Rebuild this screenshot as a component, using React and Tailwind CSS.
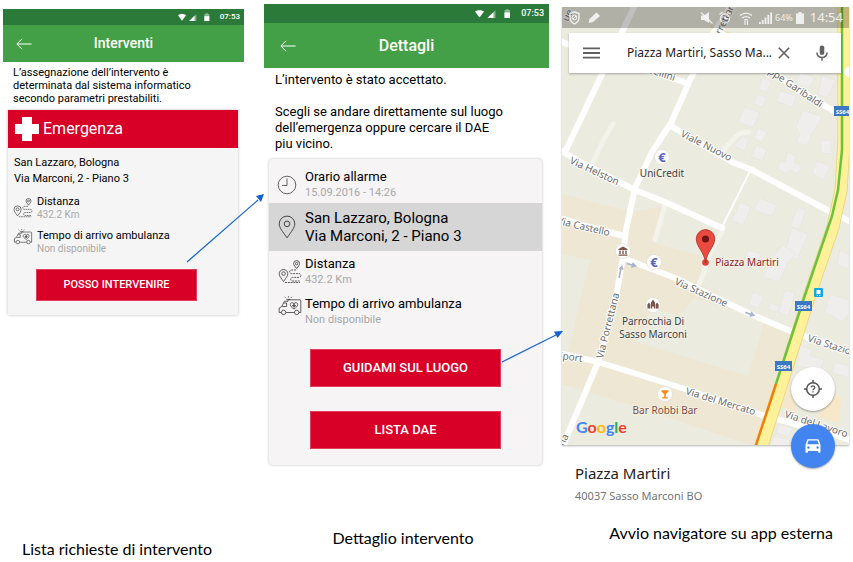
import React from "react";

/* ---------- Icons ---------- */

function BackArrow({ className }) {
  return (
    <svg viewBox="0 0 16 12" className={className} fill="none" stroke="#fff" strokeWidth="1">
      <path d="M6 .8 .9 6 6 11.2M.9 6H15.6" />
    </svg>
  );
}

function PhoneStatusIcons({ className }) {
  return (
    <svg viewBox="0 0 38 10" className={className} fill="#fff">
      <path d="M0 2.6C2.4.7 6.600 .7 9 2.600L4.500 8.500Z" />
      <path d="M12.500 9 20.500 1V9Z" opacity=".4" />
      <path d="M12.500 9 18.500 3V9Z" />
      <path d="M29.500 1h1.400V.3h2.700V1H35v8h-5.500Z" opacity=".45" />
      <path d="M29.500 3.500H35V9h-5.500Z" />
    </svg>
  );
}

function RouteIcon({ className }) {
  return (
    <svg viewBox="0 0 24 24" className={className} fill="none" stroke="#444" strokeWidth=".85">
      <path d="M5.500 21.500C3 18 1.200 16 1.200 13.800a4.300 4.300 0 0 1 8.600 0c0 2.200-1.800 4.200-4.300 7.700Z" />
      <circle cx="5.500" cy="13.600" r="1.800" />
      <path d="M18.600 8.600C17 6.300 15.600 5 15.600 3.600a3 3 0 0 1 6 0c0 1.400-1.400 2.700-3 5Z" />
      <circle cx="18.600" cy="3.600" r="1.200" />
      <path
        d="M18 10H13.500a1.800 1.800 0 0 0 0 3.600H21a1.900 1.900 0 0 1 0 3.800H14.500a1.800 1.800 0 0 0 0 3.600H22M7 22.500H22"
        strokeDasharray="2 .8"
      />
    </svg>
  );
}

function AmbulanceIcon({ className }) {
  return (
    <svg viewBox="0 0 24 20" className={className} fill="none" stroke="#444" strokeWidth=".85">
      <path d="M3.200 16.500H1.200V12l2.600-1.500 2.600-5.200H10V3.800H21.800a1 1 0 0 1 1 1V16.500H21M8 16.500h8.500" />
      <path d="M4.200 10.500H8.600V7H6" />
      <circle cx="5.600" cy="16.400" r="2.200" />
      <circle cx="18.700" cy="16.400" r="2.200" />
      <path d="M16 13C13.500 11.300 12.300 10.200 12.300 8.500c0-2 2.500-2.400 3.700-.9 1.200-1.500 3.700-1.100 3.700.9 0 1.700-1.200 2.800-3.700 4.500Z" />
      <path d="M16 7.800v3.600M14.200 9.600h3.600" strokeWidth="1.300" />
      <path d="M8.200 3.400h4.400M7.600 1.800 6.600.8M10.400 1.500V.2M13 1.800l1-1" />
    </svg>
  );
}

function ClockIcon({ className }) {
  return (
    <svg viewBox="0 0 20 20" className={className} fill="none" stroke="#555" strokeWidth=".9">
      <circle cx="10" cy="10" r="8.800" />
      <path d="M10 3.500V10.500H5" />
    </svg>
  );
}

function PinIcon({ className }) {
  return (
    <svg viewBox="0 0 18 24" className={className} fill="none" stroke="#444" strokeWidth="1">
      <path d="M9 22.800C4.500 16.500 1.200 12.500 1.200 8.900a7.800 7.800 0 0 1 15.600 0c0 3.600-3.300 7.600-7.800 13.900Z" />
      <circle cx="9" cy="8.900" r="2.800" />
    </svg>
  );
}

function CrossIcon({ className }) {
  return (
    <svg viewBox="0 0 24 24" className={className} fill="#fff">
      <path d="M7 0h10v7h7v10h-7v7H7v-7H0V7h7Z" />
    </svg>
  );
}

/* ---------- Shared pieces of the green app ---------- */

function ActionButton({ children, className }) {
  return (
    <button
      type="button"
      className={`border border-[#e0405c] bg-[#d80027] font-medium text-white ${className}`}
    >
      {children}
    </button>
  );
}

function InterventionList() {
  return (
    <section className="relative flex flex-col pt-[9px]">
      <header>
        <div className="flex h-4 items-center justify-end gap-2 bg-[#2c7a3a] pr-1 text-[8px] font-medium text-white">
          <PhoneStatusIcons className="h-[9px] w-[34px]" />
          <span>07:53</span>
        </div>
        <div className="flex h-[37px] items-center bg-[#43a047] px-[13px]">
          <button type="button" aria-label="Indietro">
            <BackArrow className="h-3 w-4" />
          </button>
          <h1 className="flex-1 pr-4 text-center text-[14px] font-medium text-white">Interventi</h1>
        </div>
      </header>

      <p className="px-[10px] pt-1 text-[11px] leading-[13px] text-black">
        L’assegnazione dell’intervento è
        <br />
        determinata dal sistema informatico
        <br />
        secondo parametri prestabiliti.
      </p>

      <article className="mr-[6px] ml-[5px] mt-[5px] bg-[#f5f5f5] pb-[14px] shadow-[0_0_3px_rgba(0,0,0,0.25)]">
        <h2 className="flex h-[38px] items-center gap-1 bg-[#d80027] px-[7px] text-[16px] text-white">
          <CrossIcon className="size-6" />
          Emergenza
        </h2>
        <p className="px-[6px] pt-[7px] text-[11px] leading-4 text-black">
          San Lazzaro, Bologna
          <br />
          Via Marconi, 2 - Piano 3
        </p>
        <dl className="px-[5px] text-[11px] leading-[13px]">
          <div className="mt-2 flex items-center gap-1">
            <RouteIcon className="size-5" />
            <div>
              <dt className="text-black">Distanza</dt>
              <dd className="text-[10px] text-[#a8a8a8]">432.2 Km</dd>
            </div>
          </div>
          <div className="mt-2 flex items-start gap-1">
            <AmbulanceIcon className="h-4 w-5" />
            <div>
              <dt className="text-black">Tempo di arrivo ambulanza</dt>
              <dd className="text-[10px] text-[#a8a8a8]">Non disponibile</dd>
            </div>
          </div>
        </dl>
        <ActionButton className="mt-[14px] ml-7 block h-8 w-[70%] text-[11px]">POSSO INTERVENIRE</ActionButton>
      </article>

      <svg viewBox="0 0 78 70" className="absolute top-[193px] -right-5 z-10 h-[70px] w-[78px]">
        <path d="M1 69 72 7" stroke="#1c69d0" strokeWidth="1.300" />
        <path d="M78 1 75 9 70 3Z" fill="#1060d0" />
      </svg>
    </section>
  );
}

function InterventionDetail() {
  return (
    <section className="relative flex flex-col pt-1 pl-[7px]">
      <header>
        <div className="flex h-[19px] items-center justify-end gap-2 bg-[#2c7a3a] pr-[5px] text-[9px] font-medium text-white">
          <PhoneStatusIcons className="h-[10px] w-[38px]" />
          <span>07:53</span>
        </div>
        <div className="flex h-[45px] items-center bg-[#43a047] px-4">
          <button type="button" aria-label="Indietro">
            <BackArrow className="h-3 w-4" />
          </button>
          <h1 className="flex-1 pr-4 text-center text-[16px] font-medium text-white">Dettagli</h1>
        </div>
      </header>

      <div className="flex flex-col gap-4 px-[11px] pt-1 text-[13px] leading-4 text-black">
        <p>L’intervento è stato accettato.</p>
        <p>
          Scegli se andare direttamente sul luogo
          <br />
          dell’emergenza oppure cercare il DAE
          <br />
          piu vicino.
        </p>
      </div>

      <article className="mr-[7px] ml-[5px] mt-[7px] rounded-sm bg-[#f6f4f5] pb-4 text-[13px] leading-4 shadow-[0_0_3px_rgba(0,0,0,0.25)]">
        <dl>
          <div className="flex h-11 items-center gap-2 px-2 pt-[7px]">
            <ClockIcon className="size-5" />
            <div>
              <dt className="text-black">Orario allarme</dt>
              <dd className="text-[11px] text-[#a8a8a8]">15.09.2016 - 14:26</dd>
            </div>
          </div>
        </dl>
        <p className="flex h-12 items-center gap-[9px] bg-[#d6d6d6] px-[9px] text-[15px] leading-[18px] text-black">
          <PinIcon className="h-6 w-[18px]" />
          <span>
            San Lazzaro, Bologna
            <br />
            Via Marconi, 2 - Piano 3
          </span>
        </p>
        <dl>
          <div className="mt-[5px] flex items-center gap-[3px] px-[9px]">
            <RouteIcon className="size-6" />
            <div>
              <dt className="text-black">Distanza</dt>
              <dd className="text-[11px] text-[#a8a8a8]">432.2 Km</dd>
            </div>
          </div>
          <div className="mt-2 flex items-start gap-[3px] px-[9px]">
            <AmbulanceIcon className="h-5 w-6" />
            <div>
              <dt className="text-black">Tempo di arrivo ambulanza</dt>
              <dd className="text-[11px] text-[#a8a8a8]">Non disponibile</dd>
            </div>
          </div>
        </dl>
        <div className="mx-auto mt-[21px] flex w-[70%] flex-col gap-6">
          <ActionButton className="h-[38px] text-[13px]">GUIDAMI SUL LUOGO</ActionButton>
          <ActionButton className="h-[38px] text-[13px]">LISTA DAE</ActionButton>
        </div>
      </article>

      <svg viewBox="0 0 62 34" className="absolute top-[330px] -right-[14px] z-10 h-[34px] w-[62px]">
        <path d="M1 32 55 5" stroke="#1c69d0" strokeWidth="1.300" />
        <path d="M62 1 56.500 8 53 1.500Z" fill="#1060d0" />
      </svg>
    </section>
  );
}

/* ---------- Map ---------- */

const tanAreas = [
  "562,194 600,204 634,212 662,206 655,243 700,256 704,286 748,314 792,334 757,446 735,440 640,408 562,384",
];

const lightAreas = [
  "562,254 590,260 578,310 568,352 562,350",
  "652,308 680,316 694,298 765,320 748,376 636,342",
];

const buildings = [
  "762,78 771,81 767,92 758,89",
  "758,94 767,98 762,107 753,103",
  "781,91 796,96 792,107 776,101",
  "800,72 815,78 808,88 796,84",
  "822,76 836,80 830,92 827,97 818,95",
  "745,107 760,113 753,127 738,122",
  "758,128 767,132 762,142 754,138",
  "742,136 749,139 744,151 734,146",
  "803,110 822,117 812,134 807,146 796,142 800,134 796,127",
  "757,145 767,150 762,161 751,156",
  "787,152 796,156 794,162 802,166 798,174 790,170 786,174 778,169 780,161 785,162",
  "817,161 830,166 823,180 812,173",
  "821,140 831,141 831,154 821,153",
  "740,202 751,207 743,225 732,221",
  "760,198 777,205 772,216 754,210",
  "798,207 806,210 799,229 790,226",
  "792,228 808,234 797,260 785,252",
  "783,245 796,254 788,262 779,282 763,277 773,256",
  "748,250 761,254 757,262 744,260",
  "840,250 849,255 849,269 837,265",
  "753,292 764,297 758,308 749,304",
  "785,290 795,293 788,316 779,312",
  "771,303 780,306 777,312 768,309",
  "830,294 849,300 849,314 842,322 825,312",
  "800,345 812,350 810,356 824,360 820,370 797,366",
  "835,362 849,366 849,378 832,373",
  "779,424 792,428 789,437 776,433",
  "774,436 790,440 788,446 770,446",
];

const paleRoads = [
  "M613 124 604 139 592 164",
  "M665 205 655 240",
  "M749 132C736 132 734 140 727 146L718 156",
  "M722 232 709 254 704 272 697 290",
];

const whiteRoads = [
  "M634 7 603 72 585 110 565 152",
  "M732 4 713 34 690 80 671 123 652 152 635 188 626 230 623 257 616 297 598 362 580 405 562 448",
  "M562 42 600 55 687 83",
  "M720 32 788 83 845 118",
  "M671 126 732 162 752 170 829 211 851 222",
  "M560 150 580 162 635 190 665 202 722 228",
  "M560 218 590 227 624 236",
  "M623 258 675 278 748 313 795 333 851 353",
  "M560 353 598 362 682 388 762 415 851 440",
];

const streetLabels = [
  { text: "Via Helston", x: 569, y: 163, angle: 25 },
  { text: "Via Castello", x: 609, y: 236, angle: 13, anchor: "end" },
  { text: "Via dello Sport", x: 582, y: 362, angle: 8, anchor: "end" },
  { text: "Via Porrettana", x: 603, y: 359, angle: -76 },
  { text: "Via Porrettana", x: 569, y: 436, angle: -64, anchor: "end" },
  { text: "rrettana", x: 721, y: 35, angle: -64 },
  { text: "Via Stazione", x: 674, y: 284, angle: 24 },
  { text: "Via Stazione", x: 807, y: 341, angle: 18 },
  { text: "Via del Mercato", x: 685, y: 394, angle: 17 },
  { text: "Via del Lavoro", x: 784, y: 417, angle: 18 },
  { text: "Viale Nuovo", x: 680, y: 136, angle: 27 },
  { text: "Giuseppe Garibaldi", x: 820, y: 108, angle: 34, anchor: "end" },
  { text: "Via Bellini", x: 674, y: 81, angle: 18, anchor: "end" },
  { text: "ue", x: 568, y: 22, angle: -64 },
];

const placeLabels = [
  { text: "UniCredit", x: 662, y: 177, color: "#3c3c3c" },
  { text: "Piazza Martiri", x: 747, y: 266, color: "#8c1c1c" },
  { text: "Parrocchia Di", x: 653, y: 325, color: "#3c3c3c" },
  { text: "Sasso Marconi", x: 653, y: 338, color: "#3c3c3c" },
  { text: "Bar Robbi Bar", x: 665, y: 414, color: "#7b4a3a" },
];

const shields = [
  { x: 834, y: 106 },
  { x: 795, y: 301 },
  { x: 775, y: 361 },
];

const poiDots = [
  { x: 662, y: 157 },
  { x: 654, y: 262 },
  { x: 623, y: 251 },
  { x: 653, y: 305 },
  { x: 665, y: 394 },
];

function StreetMap() {
  return (
    <svg
      viewBox="562 7 287 438"
      preserveAspectRatio="xMidYMid slice"
      className="block aspect-[287/438] w-full font-['Noto_Sans',sans-serif]"
    >
      <rect x="562" y="7" width="287" height="439" fill="#ecebdf" />
      {tanAreas.map((points) => (
        <polygon key={points} points={points} fill="#ede7d3" />
      ))}
      {lightAreas.map((points) => (
        <polygon key={points} points={points} fill="#ecebdf" />
      ))}
      <polygon points="710,25 745,38 740,46 715,34" fill="#f3dfb6" />
      <polygon points="790,378 800,382 795,412 781,407" fill="#f4e7cc" />
      <polygon points="829,393 842,397 838,423 818,417" fill="#f6e8c8" />
      {buildings.map((points) => (
        <polygon key={points} points={points} fill="#efeeec" stroke="#e3e2de" strokeWidth=".5" />
      ))}
      <g fill="none" strokeLinecap="round" strokeLinejoin="round">
        {paleRoads.map((d) => (
          <path key={d} d={d} stroke="#f2f3ea" strokeWidth="5" />
        ))}
        {whiteRoads.map((d) => (
          <path key={d} d={d} stroke="#fff" strokeWidth="6" />
        ))}
        <path d="M750 171 723 225" stroke="#fff" strokeWidth="1.800" />
      </g>

      <g fill="none" strokeLinejoin="round">
        <path d="M844 0 844 140 841 190 833 227 808 300 786 370 760 452" stroke="#e6d282" strokeWidth="13" />
        <path d="M844 0 844 140 841 190 833 227 808 300 786 370 760 452" stroke="#fff09a" strokeWidth="11.500" />
        <path d="M842 0 842 150 838 190 832 216 805 295 776 384" stroke="#6cc23c" strokeWidth="2.500" />
        <path d="M776 384 755 448" stroke="#f57c00" strokeWidth="2.500" />
      </g>
      <circle cx="849" cy="72" r="5" fill="#fff" />

      <g fill="#a9b3cf">
        <path d="M627 262.500l5 1.800.8-2.300 4.200 4.400-5.900 1.400.5-2-5-1.500Z" />
        <path d="M620 278l1.600-8.500 2 .4L622.200 265l-3.700 4 1.400.3-1.600 8.400Z" />
        <path d="M745.500 311.500l5 2 .8-2.200 4 4.400-5.900 1.200.6-1.900-5-1.800Z" />
      </g>

      <g fontSize="10" fill="#6d6d6d" stroke="#fff" strokeWidth="2" paintOrder="stroke" strokeLinejoin="round">
        {streetLabels.map(({ text, x, y, angle, anchor }) => (
          <text key={`${text}${x}`} transform={`translate(${x} ${y}) rotate(${angle})`} textAnchor={anchor || "start"}>
            {text}
          </text>
        ))}
      </g>

      {shields.map(({ x, y }) => (
        <g key={y}>
          <rect x={x} y={y} width="17" height="10" fill="#3b78c4" />
          <text x={x + 8.5} y={y + 7.5} fontSize="6" fontWeight="700" fill="#fff" textAnchor="middle">
            SS64
          </text>
        </g>
      ))}

      {poiDots.map(({ x, y }) => (
        <circle key={x + y} cx={x} cy={y} r="7.500" fill="#fff" stroke="#dcdacf" strokeWidth=".6" />
      ))}
      <g fontSize="13" fontWeight="700" fill="#5566c4" textAnchor="middle">
        <text x="662" y="161.500">€</text>
        <text x="654" y="266.500">€</text>
      </g>
      <path
        d="M623 246.500l4.500 2.500v1h-9v-1ZM619.300 250.500h1.400v3.500h-1.400ZM622.300 250.500h1.400v3.500h-1.400ZM625.300 250.500h1.400v3.500h-1.400ZM618.500 254.500h9v1.300h-9Z"
        fill="#7b5548"
      />
      <path
        d="M653 299.500l2 3v6h-1.200v-2h-1.600v2H651v-6ZM649 302.500l1.400 2v4h-3v-4ZM657 302.500l1.600 2v4h-3v-4Z"
        fill="#7b5548"
      />
      <path d="M661.500 390.200h7v1.200l-2.700 2.800v3h2v1.200h-5.600v-1.200h2v-3l-2.700-2.800Z" fill="#f28a1e" />

      <rect x="814" y="288" width="9" height="9" rx="1" fill="#14a7e0" />
      <path d="M816.500 290h4v4h-4ZM816.800 295h1v1h-1ZM819.300 295h1v1h-1Z" fill="#fff" />

      <circle cx="705.500" cy="262.500" r="3.300" fill="#dc4437" />
      <path
        d="M705.500 263C704.500 252 696.300 247 696.300 238.800a9.200 9.200 0 0 1 18.400 0c0 8.200-8.200 13.200-9.200 24.200Z"
        fill="#ea4a3f"
        stroke="#a82a22"
        strokeWidth=".8"
      />
      <circle cx="705.500" cy="239" r="3.500" fill="#6d1410" />

      <g fontSize="10" textAnchor="middle" stroke="#f5f3ea" strokeWidth="1.500" paintOrder="stroke">
        {placeLabels.map(({ text, x, y, color }) => (
          <text key={text} x={x} y={y} fill={color}>
            {text}
          </text>
        ))}
      </g>
    </svg>
  );
}

function AndroidStatusBar() {
  return (
    <div className="absolute inset-x-0 top-0 flex h-[21px] items-center justify-between bg-black/25 pr-[6px] pl-[7px] font-['Noto_Sans',sans-serif] text-white/80">
      <svg viewBox="0 0 32 14" className="h-[14px] w-8" fill="none" stroke="currentColor">
        <path d="M5.500 1 10 2.500V7c0 2.800-2 4.600-4.500 6C3 11.600 1 9.800 1 7V2.500Z" strokeWidth="1.400" />
        <circle cx="5.500" cy="6.500" r="2.300" />
        <path d="M4 8l3-3" />
        <path d="M19.500 12l1-4 7-6.500 3.500 3.500-7 6Z" fill="currentColor" stroke="none" />
      </svg>
      <div className="flex items-center gap-[3px]">
        <svg viewBox="0 0 72 16" className="h-4 w-[72px]" fill="none" stroke="currentColor" strokeWidth="1.200">
          <path d="M1 5.500h3L9 2v11L4 10H1Z" fill="currentColor" stroke="none" />
          <path d="M1 2.500 12.500 13.500" />
          <circle cx="25" cy="8.500" r="4.500" />
          <path d="M25 5.500v3h2.500M19.500 4.500l3-2.500M30.500 4.500l-3-2.500" />
          <path d="M40 5.500c4-3.300 8-3.300 12 0M42 8c3-2.200 5-2.200 8 0M44 10.300c1.400-1 2.600-1 4 0" />
          <path d="M45 11v4M47.500 11v4" />
          <path d="M59 12h1.800v2H59ZM61.800 10h1.800v4h-1.800ZM64.600 7.500h1.800V14h-1.800ZM67.400 5h1.800v9h-1.800ZM70.200 2.500H72V14h-1.800Z" fill="currentColor" stroke="none" />
        </svg>
        <span className="text-[9px]">64%</span>
        <svg viewBox="0 0 8 12" className="h-3 w-2" fill="currentColor">
          <path d="M2.500 0h3v1.500H8V12H0V1.500h2.500Z" />
        </svg>
        <span className="pl-[3px] text-[13px]">14:54</span>
      </div>
    </div>
  );
}

function SearchBar() {
  return (
    <div className="absolute top-[26px] right-2 left-[7px] flex h-10 items-center bg-white pr-[13px] pl-[14px] shadow-[0_1px_2px_rgba(0,0,0,0.3)]">
      <button type="button" aria-label="Menu">
        <svg viewBox="0 0 17 12" className="h-3 w-[17px]" fill="#616161">
          <path d="M0 .5h17v1.800H0ZM0 5.100h17v1.800H0ZM0 9.700h17v1.800H0Z" />
        </svg>
      </button>
      <input
        type="text"
        aria-label="Cerca"
        defaultValue="Piazza Martiri, Sasso Ma..."
        className="ml-[27px] min-w-0 flex-1 bg-transparent font-['Noto_Sans',sans-serif] text-[12px] text-[#222] outline-none"
      />
      <button type="button" aria-label="Cancella">
        <svg viewBox="0 0 12 12" className="size-3" stroke="#616161" strokeWidth="1.600">
          <path d="M.8.8l10.400 10.400M11.200.8.8 11.200" />
        </svg>
      </button>
      <button type="button" aria-label="Ricerca vocale" className="ml-[26px]">
        <svg viewBox="0 0 12 16" className="h-4 w-3">
          <rect x="3.700" y=".5" width="4.600" height="9.500" rx="2.300" fill="#616161" />
          <path d="M.9 7.500a5.100 5.100 0 0 0 10.200 0M6 12.500V15.800" fill="none" stroke="#616161" strokeWidth="1.500" />
        </svg>
      </button>
    </div>
  );
}

function GoogleLogo() {
  return (
    <span className="absolute bottom-2 left-[14px] font-['Lato',sans-serif] text-[16px] leading-5 font-bold">
      <span className="text-[#4285f4]">G</span>
      <span className="text-[#ea4335]">o</span>
      <span className="text-[#fbbc05]">o</span>
      <span className="text-[#4285f4]">g</span>
      <span className="text-[#34a853]">l</span>
      <span className="text-[#ea4335]">e</span>
    </span>
  );
}

function Navigator() {
  return (
    <section className="flex flex-col pt-[7px]">
      <div className="relative shadow-[0_1px_2px_rgba(0,0,0,0.3)]">
        <StreetMap />
        <AndroidStatusBar />
        <SearchBar />
        <GoogleLogo />
        <div className="absolute right-[14px] -bottom-[23px] flex flex-col gap-[13px]">
          <button
            type="button"
            aria-label="La mia posizione"
            className="flex size-11 items-center justify-center rounded-full bg-white shadow-[0_1px_2px_rgba(0,0,0,0.35)]"
          >
            <svg viewBox="0 0 18 18" className="size-[18px]" fill="none" stroke="#555" strokeWidth="1.500">
              <circle cx="9" cy="9" r="6.300" />
              <path d="M9 0v3M9 15v3M0 9h3M15 9h3" />
              <path d="M7.200 7.600c0-2.400 3.600-2.300 3.600 0 0 1.300-1.800 1.300-1.800 2.700M9 11.200v1.300" strokeWidth="1.300" />
            </svg>
          </button>
          <button
            type="button"
            aria-label="Avvia navigazione"
            className="flex size-11 items-center justify-center rounded-full bg-[#4285f0] shadow-[0_1px_2px_rgba(0,0,0,0.35)]"
          >
            <svg viewBox="0 0 16 14" className="h-[14px] w-4" fill="#fff" fillRule="evenodd">
              <path d="M3.300.3h9.400c.6 0 1 .3 1.200.8L15.500 6v7a.7.700 0 0 1-.7.700h-1a.7.700 0 0 1-.7-.7v-1H2.900v1a.7.700 0 0 1-.7.700h-1A.7.700 0 0 1 .5 13V6L2.100 1.100C2.300.6 2.700.3 3.300.3ZM3.500 1.600 2.300 5.300h11.400L12.500 1.600ZM3.400 7.300a1.200 1.200 0 1 0 0 2.400 1.200 1.200 0 0 0 0-2.400ZM12.600 7.300a1.200 1.200 0 1 0 0 2.400 1.200 1.200 0 0 0 0-2.400Z" />
            </svg>
          </button>
        </div>
      </div>
      <div className="px-[13px] pt-4 font-['Noto_Sans',sans-serif]">
        <h2 className="text-[15px] leading-6 text-[#222]">Piazza Martiri</h2>
        <p className="pt-[3px] text-[11px] leading-4 text-[#757575]">40037 Sasso Marconi BO</p>
      </div>
    </section>
  );
}

function Caption({ children, className }) {
  return (
    <figcaption className={`font-['Lato',sans-serif] text-[16px] leading-5 text-black ${className}`}>
      {children}
    </figcaption>
  );
}

export default function App() {
  return (
    <main className="grid min-h-screen grid-cols-[241fr_292fr_287fr] gap-x-[13px] bg-white pr-1 pl-[3px] font-['Roboto',sans-serif]">
      <figure className="flex flex-col">
        <InterventionList />
        <Caption className="mt-auto pb-[3px] pl-[19px]">Lista richieste di intervento</Caption>
      </figure>
      <figure className="flex flex-col">
        <InterventionDetail />
        <Caption className="mt-auto pb-[14px] text-center">Dettaglio intervento</Caption>
      </figure>
      <figure className="flex flex-col">
        <Navigator />
        <Caption className="mt-auto pr-4 pb-[19px] text-right">Avvio navigatore su app esterna</Caption>
      </figure>
    </main>
  );
}
